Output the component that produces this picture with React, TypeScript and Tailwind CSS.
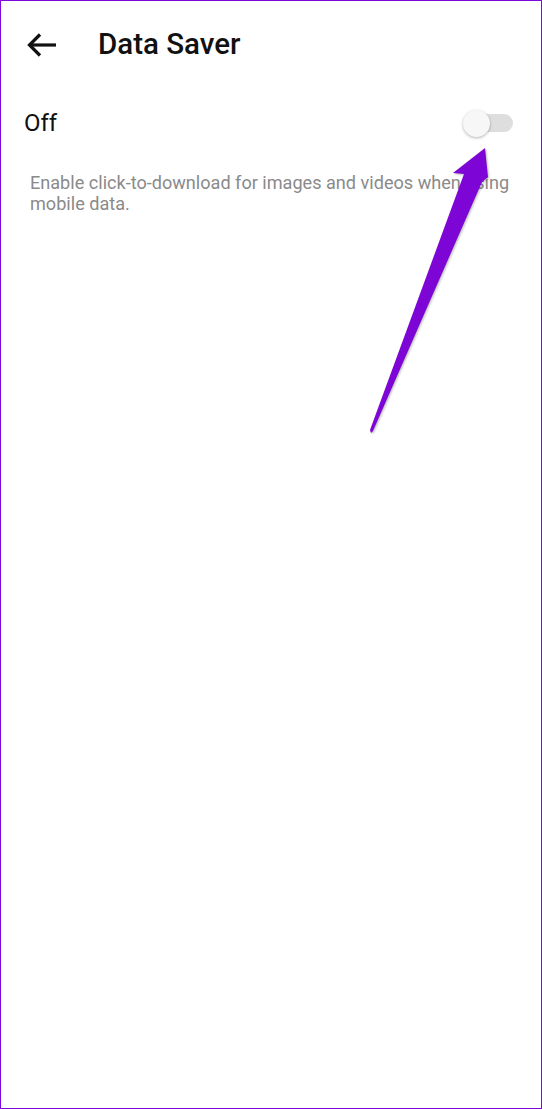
import React from 'react';

const font = { fontFamily: 'Roboto, "Noto Sans", sans-serif' };

const BackIcon = () => (
  <svg width="34" height="30" viewBox="0 0 34 30" fill="none" className="shrink-0">
    <path d="M32 15H6" stroke="#111" strokeWidth="3.2" strokeLinecap="butt" />
    <path d="M16 4.5 5.5 15 16 25.5" stroke="#111" strokeWidth="3.2" strokeLinecap="butt" strokeLinejoin="miter" />
  </svg>
);

const Toggle = () => (
  <div className="relative w-[50px] h-[28px] flex items-center">
    <div className="absolute right-0 w-[44px] h-[18px] rounded-full bg-[#dedede]" />
    <div className="absolute left-0 w-[27px] h-[27px] rounded-full bg-[#f7f7f7] shadow-[0_1px_3px_rgba(0,0,0,0.3)]" />
  </div>
);

// annotation arrow drawn on top of the screenshot
const Pointer = () => (
  <svg
    className="absolute inset-0 pointer-events-none"
    width="542"
    height="1109"
    viewBox="0 0 542 1109"
    style={{ filter: 'drop-shadow(1.5px 1.5px 1px rgba(0,0,0,0.28))' }}
  >
    <polygon
      points="484,147 487,176 481,181 372,430 370,432 369,429 463,173 452,172"
      fill="#7d05d6"
    />
  </svg>
);

export default function App() {
  return (
    <div className="relative w-[542px] h-[1109px] bg-white border border-[#7d0ad8] overflow-hidden" style={font}>
      {/* Header */}
      <div className="flex items-center h-[87px] pl-[23px]">
        <BackIcon />
        <h1 className="ml-[40px] text-[29.5px] font-medium text-[#111] leading-none">Data Saver</h1>
      </div>

      {/* Switch row */}
      <div className="flex items-center justify-between h-[44px] mt-[13px] pl-[23px] pr-[28px]">
        <span className="text-[24px] leading-[44px] text-[#111]">Off</span>
        <Toggle />
      </div>

      {/* Description */}
      <p className="mt-[27px] pl-[29px] pr-[16px] text-[18.1px] leading-[21px] text-[#8a8a8a]">
        Enable click-to-download for images and videos when using mobile data.
      </p>

      <Pointer />
    </div>
  );
}
